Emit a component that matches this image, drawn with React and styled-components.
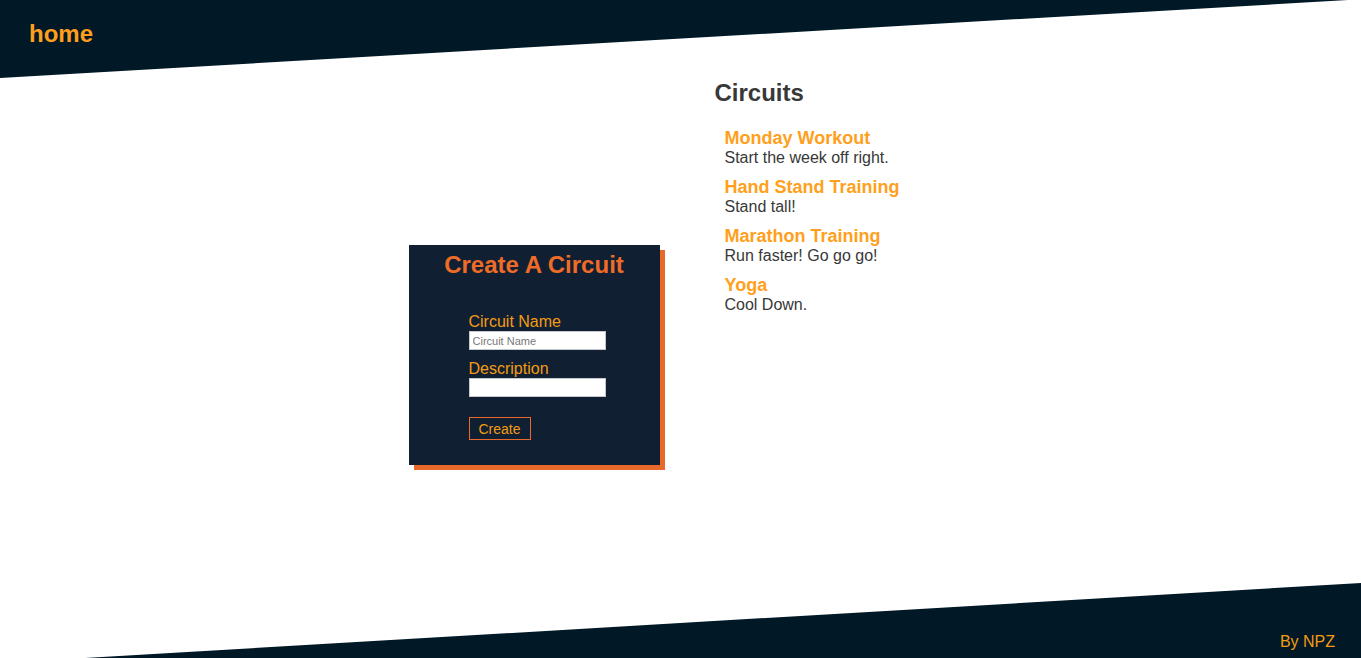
import React from "react";
import styled, { createGlobalStyle } from "styled-components";

const circuits = [
    { name: "Monday Workout", description: "Start the week off right." },
    { name: "Hand Stand Training", description: "Stand tall!" },
    { name: "Marathon Training", description: "Run faster! Go go go!" },
    { name: "Yoga", description: "Cool Down." },
];

const App = () => {
    return (
        <>
            <GlobalStyle />
            <StyledPage>
                <StyledHeader>
                    <StyledHomeLink href="#">home</StyledHomeLink>
                </StyledHeader>
                <StyledMain>
                    <StyledFormColumn>
                        <StyledCard>
                            <StyledCardTitle>Create A Circuit</StyledCardTitle>
                            <StyledForm onSubmit={e => e.preventDefault()}>
                                <StyledLabel htmlFor="name">Circuit Name</StyledLabel>
                                <StyledInput id="name" type="text" placeholder="Circuit Name" />
                                <StyledLabel htmlFor="description" $spaced>Description</StyledLabel>
                                <StyledInput id="description" type="text" />
                                <StyledButton type="submit">Create</StyledButton>
                            </StyledForm>
                        </StyledCard>
                    </StyledFormColumn>
                    <StyledListColumn>
                        <StyledHeading>Circuits</StyledHeading>
                        <StyledList>
                            {circuits.map(c => (
                                <StyledItem key={c.name}>
                                    <StyledItemName>{c.name}</StyledItemName>
                                    <StyledItemDesc>{c.description}</StyledItemDesc>
                                </StyledItem>
                            ))}
                        </StyledList>
                    </StyledListColumn>
                </StyledMain>
                <StyledFooter>
                    <StyledCredit>By NPZ</StyledCredit>
                </StyledFooter>
            </StyledPage>
        </>
    );
}

export default App;

const GlobalStyle = createGlobalStyle`
    html, body {
        margin: 0;
        padding: 0;
        background: #fff;
        font-family: "Liberation Sans", Arial, sans-serif;
    }
`
const StyledPage = styled.div`
    display: flex;
    flex-direction: column;
    height: 100vh;
    overflow: hidden;
`
const StyledHeader = styled.header`
    height: 78px;
    flex-shrink: 0;
    box-sizing: border-box;
    padding: 20px 29px;
    background: #011826;
    clip-path: polygon(0 0, 1348px 0, 0 100%);
`
const StyledHomeLink = styled.a`
    font-size: 24px;
    font-weight: 700;
    color: #ff9f1c;
    text-decoration: none;
`
const StyledMain = styled.main`
    flex: 1;
    display: grid;
    grid-template-columns: 1fr 1fr;
`
const StyledFormColumn = styled.div`
    display: flex;
    justify-content: flex-end;
    align-items: flex-start;
    padding: 167px 21px 0 0;
`
const StyledCard = styled.div`
    width: 251px;
    height: 220px;
    box-sizing: border-box;
    padding: 6px 0 0;
    background: #111f32;
    box-shadow: 5px 5px 0 #e8692a;
`
const StyledCardTitle = styled.h2`
    margin: 0;
    font-size: 24px;
    font-weight: 700;
    text-align: center;
    color: #ee6c28;
`
const StyledForm = styled.form`
    display: flex;
    flex-direction: column;
    align-items: flex-start;
    padding: 34px 0 0 60px;
`
const StyledLabel = styled.label`
    font-size: 16px;
    color: #f39c12;
    margin-top: ${p => (p.$spaced ? "10px" : "0")};
`
const StyledInput = styled.input`
    width: 137px;
    height: 19px;
    box-sizing: border-box;
    border: 1px solid #c5c9cd;
    padding: 0 3px;
    font-family: "Liberation Sans", Arial, sans-serif;
    font-size: 11px;
    color: #333;
    background: #fff;
    outline: none;

    &::placeholder {
        color: #777;
    }
`
const StyledButton = styled.button`
    margin-top: 20px;
    width: 62px;
    height: 23px;
    padding: 0;
    background: transparent;
    border: 1px solid #e8692a;
    color: #f39c12;
    font-family: "Liberation Sans", Arial, sans-serif;
    font-size: 14px;
    cursor: pointer;
`
const StyledListColumn = styled.div`
    padding: 1px 0 0 34px;
`
const StyledHeading = styled.h2`
    margin: 0;
    font-size: 24px;
    font-weight: 700;
    color: #383838;
`
const StyledList = styled.ul`
    list-style: none;
    margin: 21px 0 0;
    padding: 0 0 0 10px;
    display: flex;
    flex-direction: column;
    gap: 10px;
`
const StyledItem = styled.li`
    display: flex;
    flex-direction: column;
`
const StyledItemName = styled.span`
    font-size: 18px;
    font-weight: 700;
    color: #ff9f1c;
`
const StyledItemDesc = styled.span`
    font-size: 16px;
    color: #383838;
`
const StyledFooter = styled.footer`
    height: 75px;
    flex-shrink: 0;
    box-sizing: border-box;
    display: flex;
    justify-content: flex-end;
    align-items: flex-end;
    padding: 0 26px 7px;
    background: #011826;
    clip-path: polygon(85px 100%, 100% 0, 100% 100%);
`
const StyledCredit = styled.span`
    font-size: 16px;
    color: #f39c12;
`
